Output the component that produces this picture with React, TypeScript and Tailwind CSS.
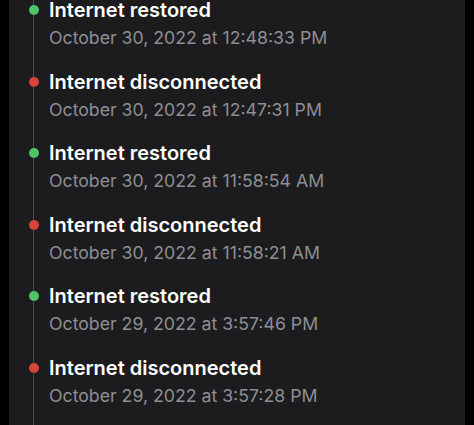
const EVENTS = [
  { ok: true, time: "October 30, 2022 at 12:48:33 PM" },
  { ok: false, time: "October 30, 2022 at 12:47:31 PM" },
  { ok: true, time: "October 30, 2022 at 11:58:54 AM" },
  { ok: false, time: "October 30, 2022 at 11:58:21 AM" },
  { ok: true, time: "October 29, 2022 at 3:57:46 PM" },
  { ok: false, time: "October 29, 2022 at 3:57:28 PM" },
];

export default function App() {
  return (
    <div className="flex h-[425px] w-[474px] overflow-hidden bg-black">
      <div className="ml-[9px] w-[456px] bg-[#1c1c1e]">
        <div className="relative mt-[-4px] pl-[24px]">
          <div className="absolute top-0 bottom-[-40px] left-[24px] w-px bg-[#4a4a4d]" />
          {EVENTS.map((e, i) => (
            <div key={i} className="relative flex pb-[15.5px]">
              <div className="flex h-[28px] w-[16px] items-center justify-start">
                <span
                  className={
                    e.ok
                      ? "ml-[-4.5px] h-[10px] w-[10px] rounded-full bg-[#4cc467]"
                      : "ml-[-4.5px] h-[10px] w-[10px] rounded-full bg-[#d6443b]"
                  }
                />
              </div>
              <div className="flex flex-col" style={{ fontFamily: "Inter, 'Liberation Sans', sans-serif" }}>
                <div className="h-[28px] text-[20px] leading-[28px] font-semibold text-white">
                  {e.ok ? "Internet restored" : "Internet disconnected"}
                </div>
                <div className="h-[28px] text-[17.7px] leading-[28px] text-[#8e8e93]">{e.time}</div>
              </div>
            </div>
          ))}
        </div>
      </div>
    </div>
  );
}
